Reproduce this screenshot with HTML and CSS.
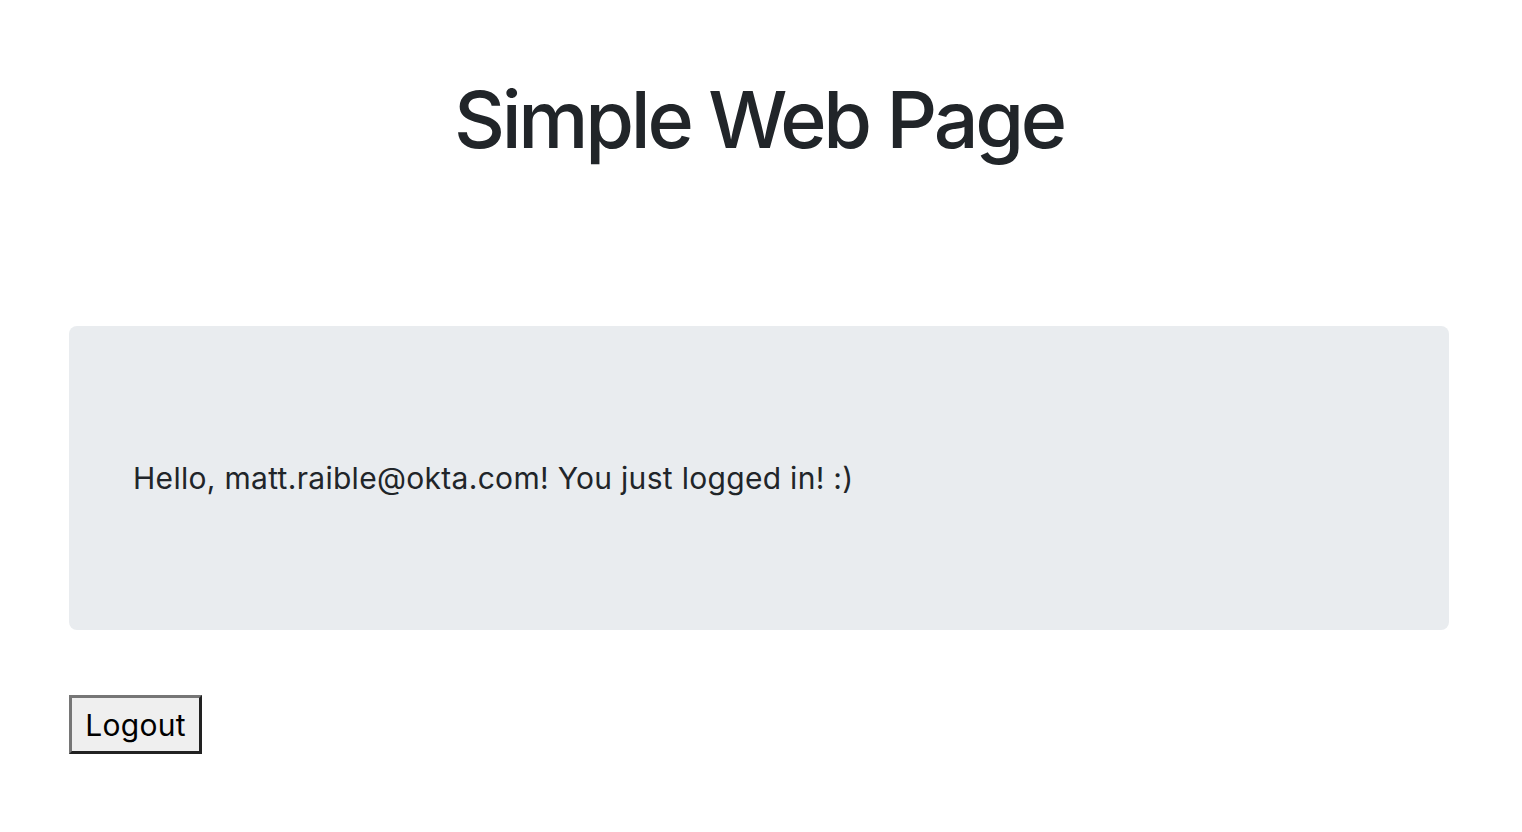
FILE: index.html
```html
<!DOCTYPE html>
<html>
<head>
<meta charset="utf-8">
<link rel="stylesheet" href="styles.css">
</head>
<body>
<div class="page">
  <h1 class="title">Simple Web Page</h1>
  <div class="jumbotron">
    <p class="greeting">Hello, matt.raible@okta.com! You just logged in! :)</p>
  </div>
  <button class="logout">Logout</button>
</div>
</body>
</html>
```
FILE: styles.css
```css
html, body {
  margin: 0;
  padding: 0;
  background: #ffffff;
}
.page {
  font-family: Inter, "Liberation Sans", sans-serif;
  color: #212529;
  padding: 0 73px 0 69px;
  display: flex;
  flex-direction: column;
  align-items: flex-start;
}
.title {
  align-self: stretch;
  text-align: center;
  font-size: 79px;
  font-weight: 500;
  line-height: 1;
  margin: 80px 0 0 0;
  height: 82px;
  letter-spacing: -3.3px;
}
.jumbotron {
  align-self: stretch;
  background: #e9ecef;
  border-radius: 8px;
  height: 304px;
  margin-top: 164px;
  padding: 0 64px;
  display: flex;
  align-items: center;
}
.greeting {
  margin: 0;
  font-size: 30px;
  line-height: 36px;
  font-weight: 400;
  letter-spacing: 0.3px;
}
.logout {
  margin-top: 65px;
  font-family: Inter, "Liberation Sans", sans-serif;
  font-size: 30px;
  color: #000;
  background: #efefef;
  border-style: solid;
  border-width: 3px;
  border-color: #767676 #222 #222 #767676;
  padding: 4px 12px;
  height: 59px;
  width: 133px;
  line-height: 1;
  letter-spacing: 0.3px;
}
```
